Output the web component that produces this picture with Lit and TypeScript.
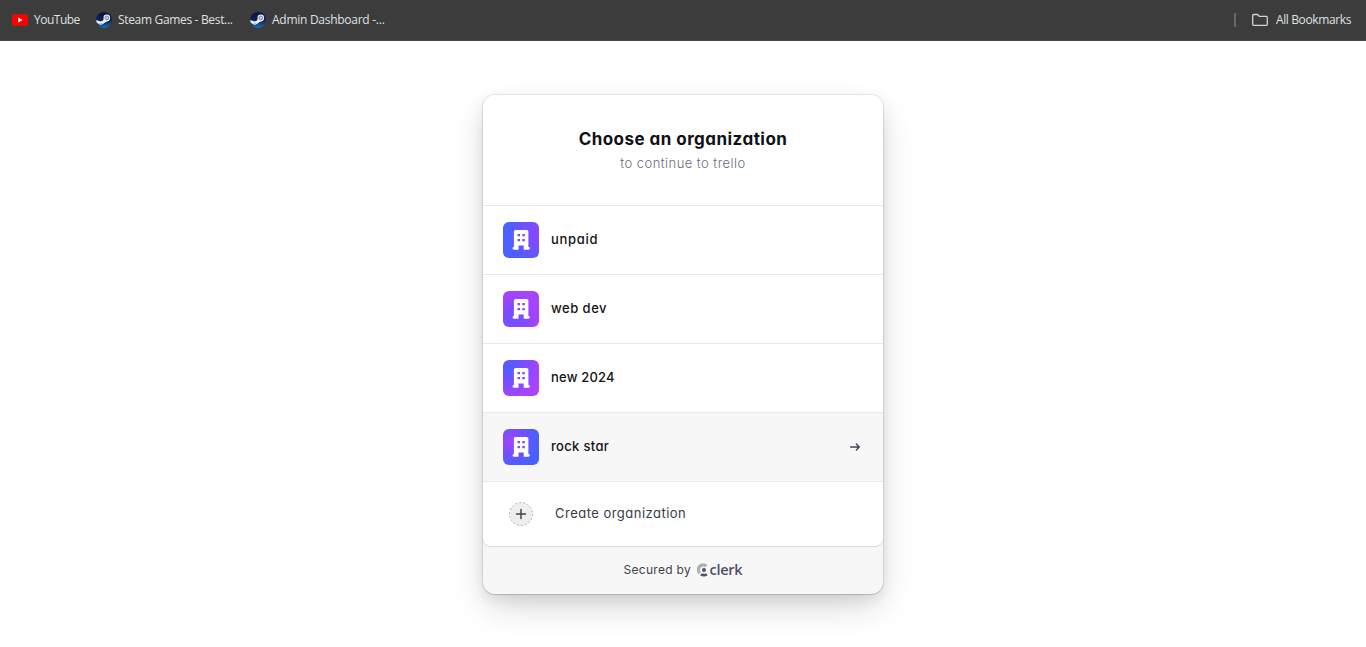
import { LitElement, html, css, svg } from "lit";
import { customElement } from "lit/decorators.js";

const steam = html`<svg width="16" height="16" viewBox="0 0 16 16">
  <defs><linearGradient id="sg" x1="0" y1="0" x2="0" y2="1"><stop offset="0" stop-color="#0b1340"/><stop offset=".5" stop-color="#0c2355"/><stop offset="1" stop-color="#1a6fa8"/></linearGradient></defs>
  <circle cx="8" cy="8" r="8" fill="url(#sg)"/>
  <path d="M.2 8 4.500 9.600 7.100 8.400 8.500 5.400 13 8.500 9.200 10.200 7.200 11.800 4.700 13 2.400 11.800.6 10.600Z" fill="#eef1f6"/>
  <circle cx="10.800" cy="5.900" r="3.300" fill="#eef1f6"/>
  <circle cx="10.800" cy="5.900" r="1.900" fill="#c3c9d8" stroke="#4a5678" stroke-width=".6"/>
  <path d="M3.600 11.700Q5 12.600 6.200 11.300" fill="none" stroke="#5c77a5" stroke-width=".6"/>
</svg>`;

const building = svg`<path fill="#fff" fill-rule="evenodd" d="M12.500 8h11.300a1.600 1.600 0 0 1 1.600 1.600V25h.1a1.300 1.300 0 0 1 0 2.700h-4.800v-4.200h-5.200v4.200h-4.600a1.300 1.300 0 0 1 0-2.700h0V9.600A1.600 1.600 0 0 1 12.500 8ZM14.500 12v2.300h2.500v-2.300ZM19.300 12v2.300h2.500v-2.300ZM14.500 16.900v2.300h2.500v-2.300ZM19.300 16.900v2.300h2.500v-2.300Z"/>`;

const organizations = [
  { name: "unpaid", tone: "a", spacing: "t1" },
  { name: "web dev", tone: "b", spacing: "t2" },
  { name: "new 2024", tone: "c", spacing: "t3" },
  { name: "rock star", tone: "d", spacing: "t4", active: true },
];

@customElement("app-root")
export class AppRoot extends LitElement {
  static styles = css`
    :host { display: block; height: 647px; background: #fff; overflow: hidden; font-family: Inter, "Liberation Sans", sans-serif; }
    svg { display: block; flex: none; }
    .bar { box-sizing: border-box; height: 41px; background: #3c3c3c; border-bottom: 1px solid #474747; display: flex; align-items: center; padding: 0 15px 0 12px; font: 12px/16px "Open Sans", "Noto Sans", sans-serif; color: #dfe1e5; white-space: nowrap; }
    .mark { display: flex; align-items: center; gap: 6px; margin-right: 16px; }
    .label { display: block; }
    .l1 { width: 46px; letter-spacing: -.5px; }
    .l2 { width: 116px; letter-spacing: -.33px; }
    .l3 { width: 114px; letter-spacing: -.27px; }
    .l4 { width: 75px; letter-spacing: -.38px; }
    .grow { flex: 1; }
    .sep { width: 2px; height: 14px; background: #66676b; margin-right: 16px; }
    .all { display: flex; align-items: center; gap: 8px; }
    .stage { display: flex; justify-content: center; padding-top: 54px; }
    .card { width: 400px; height: 499px; border-radius: 12px; background: #f7f7f7; display: flex; flex-direction: column;
      box-shadow: 0 0 0 1px rgba(0,0,0,.08), 0 1px 1px rgba(0,0,0,.1), 0 15px 35px -5px rgba(25,28,33,.2), 0 5px 15px rgba(0,0,0,.08); }
    .panel { height: 451px; border-radius: 12px 12px 8px 8px; background: #fff; overflow: hidden; box-shadow: 0 1px 1px rgba(0,0,0,.13); }
    .head { height: 110px; box-sizing: border-box; padding-top: 32px; text-align: center; white-space: nowrap; }
    h1 { margin: 0; font-size: 17px; line-height: 24px; font-weight: 700; color: #111115; letter-spacing: .46px; }
    p { margin: 3px 0 0; font-size: 13px; line-height: 18px; color: #6b6d7c; font-weight: 300; letter-spacing: .45px; }
    h1, p, .name, .create, .secured { font-feature-settings: "cv11" 1; }
    .row { height: 69px; box-sizing: border-box; border-top: 1px solid #eaeaea; display: flex; align-items: center; padding: 0 20px; gap: 12px; }
    .row.active { background: #f7f7f7; }
    .tile { width: 36px; height: 36px; border-radius: 6px; overflow: hidden; flex: none; }
    .a { background: radial-gradient(circle at 95% 35%, #8d43ff 0, #7250ff 35%, #4c60ff 70%); }
    .b { background: radial-gradient(circle at 30% 75%, #6c52ff 0, #8549ff 32%, #a742ff 62%); }
    .c { background: radial-gradient(circle at 18% 22%, #4b5fff 0, #7550ff 34%, #a943ff 75%); }
    .d { background: radial-gradient(circle at 25% 35%, #a443f5 0, #7050ff 38%, #4860ff 72%); }
    .name { flex: 1; font-size: 13px; line-height: 18px; font-weight: 450; color: #131316; padding-bottom: 2px; }
    .t1 { letter-spacing: .7px; } .t2 { letter-spacing: .48px; } .t3 { letter-spacing: .2px; } .t4 { letter-spacing: .32px; }
    .new { height: 65px; box-sizing: border-box; border-top: 1px solid #eaeaea; display: flex; align-items: center; padding: 0 26px; gap: 22px; }
    .create { font-size: 13px; line-height: 18px; color: #3a3b45; letter-spacing: .48px; padding-bottom: 2px; }
    .foot { height: 48px; display: flex; align-items: center; justify-content: center; gap: 5px; color: #42434d; }
    .secured { width: 68px; font-size: 12px; line-height: 16px; white-space: nowrap; letter-spacing: .3px; }
    .clerk { display: flex; align-items: center; gap: 2px; color: #4d4f68; font: 600 14.5px/16px "Open Sans", "Noto Sans", sans-serif; letter-spacing: -.25px; width: 46px; }
  `;

  render() {
    return html`
      <div class="bar">
        <div class="mark">
          <svg width="16" height="16" viewBox="0 0 16 16"><rect y="2.200" width="16" height="11.600" rx="3" fill="#f00"/><path d="M6.300 5.500 10.500 8 6.300 10.500Z" fill="#fff"/></svg>
          <span class="label l1">YouTube</span>
        </div>
        <div class="mark">${steam}<span class="label l2">Steam Games - Best...</span></div>
        <div class="mark">${steam}<span class="label l3">Admin Dashboard -...</span></div>
        <div class="grow"></div>
        <div class="sep"></div>
        <div class="all">
          <svg width="16" height="14" viewBox="0 0 16 14"><path d="M.7 11.200V2.500Q.7 1.500 1.700 1.500H5.500L7.300 3.300H14.300Q15.300 3.300 15.300 4.300V11.200Q15.300 12.300 14.300 12.300H1.700Q.7 12.300.7 11.200Z" fill="none" stroke="#d0d2d6" stroke-width="1.300"/></svg>
          <span class="label l4">All Bookmarks</span>
        </div>
      </div>
      <div class="stage">
        <div class="card">
          <div class="panel">
            <div class="head"><h1>Choose an organization</h1><p>to continue to trello</p></div>
            ${organizations.map((o) => html`
              <div class="row ${o.active ? "active" : ""}">
                <div class="tile ${o.tone}"><svg width="36" height="36" viewBox="0 0 36 36">${building}</svg></div>
                <div class="name"><span class=${o.spacing}>${o.name}</span></div>
                ${o.active ? html`<svg width="16" height="16" viewBox="0 0 16 16"><path d="M3.600 8H12.200M9.300 5 12.300 8 9.300 11" fill="none" stroke="#42435a" stroke-width="1.300" stroke-linecap="round" stroke-linejoin="round"/></svg>` : ""}
              </div>`)}
            <div class="new">
              <svg width="24" height="24" viewBox="0 0 24 24"><circle cx="12" cy="12" r="11.500" fill="#eee" stroke="#b5b5b8" stroke-dasharray="2 2"/><path d="M12 7.500v9M7.500 12h9" stroke="#42434d" stroke-width="1.500" stroke-linecap="round"/></svg>
              <span class="create">Create organization</span>
            </div>
          </div>
          <div class="foot">
            <span class="secured">Secured by</span>
            <div class="clerk">
              <svg width="11" height="14" viewBox="0 0 11 14"><path d="M10.500 2A6.200 6.200 0 0 0 1.700 11.200L4 9A3.200 3.200 0 0 1 8.200 4.200Z" fill="#adaeb8"/><circle cx="7" cy="7" r="2" fill="#52546a"/><path d="M3 12.200 5 10.200Q7 11.200 9 10.200L10.700 12.200Q7 15 3 12.200Z" fill="#52546a"/></svg>
              <span>clerk</span>
            </div>
          </div>
        </div>
      </div>`;
  }
}
